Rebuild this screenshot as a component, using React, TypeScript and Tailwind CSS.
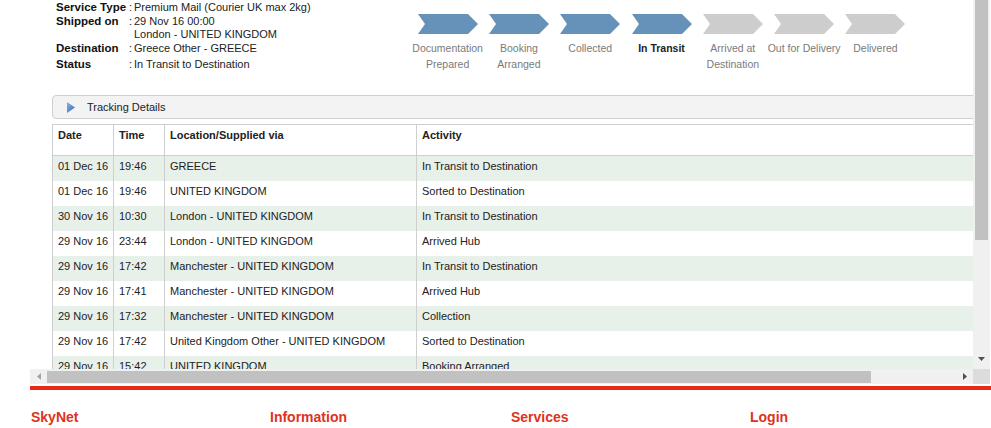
import React from "react";

const steps = [
  { lines: ["Documentation", "Prepared"], done: true },
  { lines: ["Booking", "Arranged"], done: true },
  { lines: ["Collected"], done: true },
  { lines: ["In Transit"], done: true, current: true },
  { lines: ["Arrived at", "Destination"], done: false },
  { lines: ["Out for Delivery"], done: false },
  { lines: ["Delivered"], done: false },
];

const rows = [
  ["01 Dec 16", "19:46", "GREECE", "In Transit to Destination"],
  ["01 Dec 16", "19:46", "UNITED KINGDOM", "Sorted to Destination"],
  ["30 Nov 16", "10:30", "London - UNITED KINGDOM", "In Transit to Destination"],
  ["29 Nov 16", "23:44", "London - UNITED KINGDOM", "Arrived Hub"],
  ["29 Nov 16", "17:42", "Manchester - UNITED KINGDOM", "In Transit to Destination"],
  ["29 Nov 16", "17:41", "Manchester - UNITED KINGDOM", "Arrived Hub"],
  ["29 Nov 16", "17:32", "Manchester - UNITED KINGDOM", "Collection"],
  ["29 Nov 16", "17:42", "United Kingdom Other - UNITED KINGDOM", "Sorted to Destination"],
  ["29 Nov 16", "15:42", "UNITED KINGDOM", "Booking Arranged"],
];

function Chevron({ done }: { done: boolean }) {
  return (
    <svg width="60" height="20" viewBox="0 0 60 20" className="block">
      <polygon points="0,0 50,0 60,10 50,20 0,20 7,10" fill={done ? "#6691b8" : "#cdcdcd"} />
    </svg>
  );
}

function InfoRow({ label, children, className }: { label: string; children: React.ReactNode; className?: string }) {
  return (
    <div className={"flex " + (className ?? "")}>
      <div className="w-[73px] shrink-0 text-[11.5px] font-bold leading-[13px] text-[#111]">{label}</div>
      <div className="flex text-[11px] leading-[13px] text-[#222]">
        <span className="w-[5px]">:</span>
        <div>{children}</div>
      </div>
    </div>
  );
}

function VScrollbar() {
  return (
    <div className="flex h-[369px] w-[17px] flex-col bg-[#f0f0f0]">
      <div className="mx-[2px] h-[240px] bg-[#c1c1c1]" />
      <div className="flex-1" />
      <div className="flex h-[17px] items-center justify-center pb-[3px]">
        <svg width="7" height="4" viewBox="0 0 7 4">
          <polygon points="0,0 7,0 3.5,4" fill="#505050" />
        </svg>
      </div>
    </div>
  );
}

function HScrollbar() {
  return (
    <div className="flex h-[15px]">
      <div className="flex w-[943px] items-center bg-[#f0f0f0]">
        <div className="flex w-[17px] justify-center">
          <svg width="4" height="7" viewBox="0 0 4 7">
            <polygon points="4,0 4,7 0,3.5" fill="#a3a3a3" />
          </svg>
        </div>
        <div className="h-[12px] w-[824px] bg-[#c1c1c1]" />
        <div className="flex-1" />
        <div className="flex w-[17px] justify-center">
          <svg width="4" height="7" viewBox="0 0 4 7">
            <polygon points="0,0 4,3.5 0,7" fill="#505050" />
          </svg>
        </div>
      </div>
      <div className="w-[17px] bg-[#dcdcdc]" />
    </div>
  );
}

export default function App() {
  return (
    <div className="h-[428px] w-[991px] overflow-hidden bg-white font-['Liberation_Sans',Arial,sans-serif]">
      <div className="ml-[30px] w-[960px]">
        <div className="flex">
          <div className="h-[369px] w-[943px] overflow-hidden">
            <div className="w-[1100px] pl-[22px]">
              {/* shipment summary + progress */}
              <div className="flex h-[95px]">
                <div className="flex w-[360px] flex-col gap-[1px] pl-[4px] pt-[1px]">
                  <InfoRow label="Service Type">Premium Mail (Courier UK max 2kg)</InfoRow>
                  <InfoRow label="Shipped on">
                    <div>29 Nov 16 00:00</div>
                    <div>London - UNITED KINGDOM</div>
                  </InfoRow>
                  <InfoRow label="Destination">Greece Other - GREECE</InfoRow>
                  <InfoRow label="Status" className="mt-[2px]">
                    In Transit to Destination
                  </InfoRow>
                </div>
                <div className="flex pt-[14px]">
                  {steps.map((s) => (
                    <div key={s.lines[0]} className="flex w-[71.3px] flex-col items-center">
                      <Chevron done={s.done} />
                      <div
                        className={
                          s.current
                            ? "mt-[6px] whitespace-nowrap text-center text-[10.5px] font-bold leading-[16px] text-[#222]"
                            : "mt-[6px] whitespace-nowrap text-center text-[10.5px] leading-[16px] text-[#7a7a7a]"
                        }
                      >
                        {s.lines.map((l) => (
                          <div key={l}>{l}</div>
                        ))}
                      </div>
                    </div>
                  ))}
                </div>
              </div>

              {/* tracking details bar */}
              <div className="flex h-[24px] items-center rounded-l-[4px] border border-[#cfcfcf] bg-[#f3f3f3]">
                <svg width="8" height="11" viewBox="0 0 8 11" className="ml-[14px]">
                  <defs>
                    <linearGradient id="tri" x1="0" y1="0" x2="1" y2="1">
                      <stop offset="0" stopColor="#8fb4e6" />
                      <stop offset="1" stopColor="#2f68b4" />
                    </linearGradient>
                  </defs>
                  <polygon points="0,0 8,5.5 0,11" fill="url(#tri)" />
                </svg>
                <span className="ml-[12px] text-[11px] text-[#222]">Tracking Details</span>
              </div>

              {/* table */}
              <table className="mt-[5px] w-full table-fixed border-collapse text-[11px] text-[#222]">
                <colgroup>
                  <col className="w-[61px]" />
                  <col className="w-[51px]" />
                  <col className="w-[252px]" />
                  <col />
                </colgroup>
                <thead>
                  <tr className="h-[31px] border border-[#cfcfcf]">
                    {["Date", "Time", "Location/Supplied via", "Activity"].map((h) => (
                      <th
                        key={h}
                        className="border-l border-[#cfcfcf] px-[5px] pt-[4px] text-left align-top font-bold leading-[13px]"
                      >
                        {h}
                      </th>
                    ))}
                  </tr>
                </thead>
                <tbody>
                  {rows.map((r, i) => (
                    <tr key={i} className={i % 2 === 0 ? "h-[25px] bg-[#e8f0ea]" : "h-[25px] bg-white"}>
                      {r.map((c, j) => (
                        <td
                          key={j}
                          className="whitespace-nowrap border-l border-[#cfcfcf] px-[5px] pb-[3px] align-middle leading-[13px]"
                        >
                          {c}
                        </td>
                      ))}
                    </tr>
                  ))}
                </tbody>
              </table>
            </div>
          </div>
          <VScrollbar />
        </div>
        <HScrollbar />
      </div>

      <div className="ml-[30px] mt-[2px] h-[4px] w-[961px] bg-[#e52b17]" />

      <div className="ml-[31px] mt-[19px] flex text-[14px] font-bold leading-[16px] text-[#dd3320]">
        <div className="w-[239px]">SkyNet</div>
        <div className="w-[241px]">Information</div>
        <div className="w-[239px]">Services</div>
        <div>Login</div>
      </div>
    </div>
  );
}
